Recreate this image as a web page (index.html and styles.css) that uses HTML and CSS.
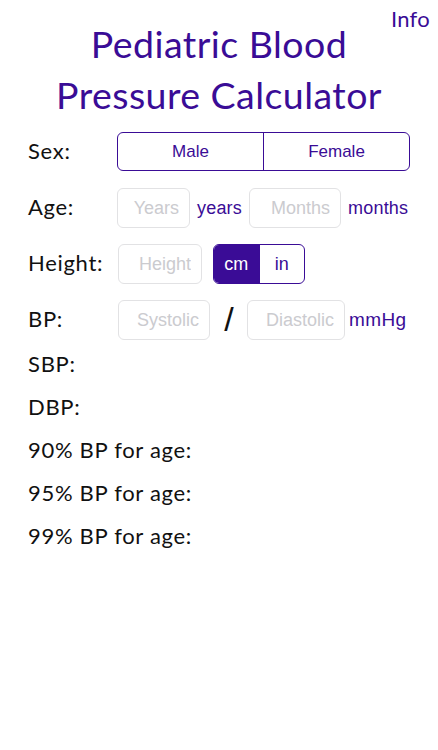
FILE: index.html
```html
<!DOCTYPE html>
<html lang="en">
<head>
<meta charset="utf-8">
<title>Pediatric Blood Pressure Calculator</title>
<link rel="stylesheet" href="styles.css">
</head>
<body>
<div class="screen">
  <div class="topbar"><a class="info" href="#">Info</a></div>
  <h1 class="title">Pediatric Blood<br>Pressure Calculator</h1>

  <div class="form">
    <div class="row">
      <div class="label">Sex:</div>
      <div class="seg seg-sex">
        <div class="seg-item">Male</div>
        <div class="seg-item">Female</div>
      </div>
    </div>
    <div class="row">
      <div class="label">Age:</div>
      <div class="controls">
        <input class="field w-years" placeholder="Years">
        <span class="unit">years</span>
        <input class="field w-months" placeholder="Months">
        <span class="unit">months</span>
      </div>
    </div>
    <div class="row">
      <div class="label">Height:</div>
      <div class="controls gap-wide">
        <input class="field w-height" placeholder="Height">
        <div class="seg seg-unit">
          <div class="seg-item active">cm</div>
          <div class="seg-item">in</div>
        </div>
      </div>
    </div>
    <div class="row">
      <div class="label">BP:</div>
      <div class="controls">
        <input class="field w-sys" placeholder="Systolic">
        <span class="slash">/</span>
        <input class="field w-dia" placeholder="Diastolic">
        <span class="unit tight">mmHg</span>
      </div>
    </div>
  </div>

  <div class="results">
    <div class="result">SBP:</div>
    <div class="result">DBP:</div>
    <div class="result">90% BP for age:</div>
    <div class="result">95% BP for age:</div>
    <div class="result">99% BP for age:</div>
  </div>
</div>
</body>
</html>
```
FILE: styles.css
```css
html, body {
  margin: 0;
  padding: 0;
  background: #ffffff;
}

.screen {
  width: 438px;
  height: 750px;
  font-family: Lato, "Noto Sans", sans-serif;
  color: #111111;
}

.topbar {
  display: flex;
  justify-content: flex-end;
  padding: 5px 8px 0 0;
  height: 28px;
}

.info {
  color: #3a0c96;
  text-decoration: none;
  font-size: 22px;
  line-height: 28px;
  letter-spacing: 0.3px;
}

.title {
  margin: -15px 0 0 0;
  text-align: center;
  font-weight: 400;
  font-size: 37.5px;
  letter-spacing: 0.45px;
  line-height: 51px;
  color: #3a0c96;
}

.form {
  display: flex;
  flex-direction: column;
  gap: 16px;
  padding: 12px 0 0 28px;
}

.row {
  display: flex;
  align-items: center;
  height: 40px;
}

.label {
  width: 89px;
  flex: none;
  font-size: 22px;
  letter-spacing: 0.7px;
  margin-top: -3px;
}

.controls {
  display: flex;
  align-items: center;
  gap: 7px;
}

.controls.gap-wide {
  gap: 11px;
}

.field {
  box-sizing: border-box;
  height: 40px;
  border: 1px solid #e2e2e4;
  border-radius: 6px;
  padding: 0 10px 0 6px;
  text-align: right;
  font-family: "Liberation Sans", Arial, sans-serif;
  font-size: 18px;
  color: #222;
  background: #fff;
  outline: none;
}

.field::placeholder {
  color: #cbcbcf;
}

.w-years { width: 73px; }
.w-months { width: 92px; }
.w-height { width: 84px; margin-left: 1px; }
.w-sys { width: 92px; margin-left: 1px; }
.w-dia { width: 98px; }

.unit {
  font-family: "Liberation Sans", Arial, sans-serif;
  font-size: 18px;
  color: #3a0c96;
  letter-spacing: 0.2px;
}

.unit.tight {
  margin-left: -3px;
  font-size: 19px;
  letter-spacing: 0.4px;
}

.slash {
  font-family: "Liberation Sans", Arial, sans-serif;
  font-size: 34px;
  color: #111;
  width: 22px;
  text-align: center;
  margin: -2px 0 0 1px;
}

.seg {
  box-sizing: border-box;
  display: flex;
  border: 1.5px solid #3a0c96;
  border-radius: 6px;
  overflow: hidden;
  font-family: "Liberation Sans", Arial, sans-serif;
  color: #3a0c96;
}

.seg-sex {
  width: 293px;
  height: 39px;
  margin-top: -1px;
  font-size: 17px;
}

.seg-unit {
  width: 92px;
  height: 40px;
  font-size: 18px;
}

.seg-item {
  flex: 1;
  display: flex;
  align-items: center;
  justify-content: center;
}

.seg-item + .seg-item {
  border-left: 1.5px solid #3a0c96;
}

.seg-item.active {
  background: #3a0c96;
  color: #ffffff;
}

.results {
  padding: 2px 0 0 28px;
}

.result {
  font-size: 22px;
  letter-spacing: 0.7px;
  line-height: 43px;
}
```
